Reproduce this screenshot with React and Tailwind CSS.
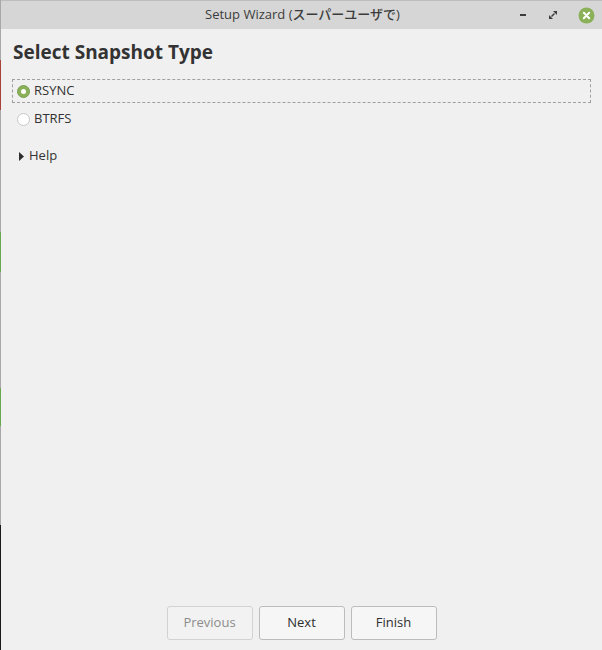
import React from "react";

const font = { fontFamily: '"Open Sans", "Noto Sans", "Noto Sans CJK JP", sans-serif' };

function Radio({ checked }) {
  if (checked) {
    return (
      <span className="w-[13px] h-[13px] rounded-full bg-[#8bb158] border border-[#7a9e4e] flex items-center justify-center">
        <span className="w-[5px] h-[5px] rounded-full bg-white" />
      </span>
    );
  }
  return <span className="w-[13px] h-[13px] rounded-full bg-white border border-[#c8c8c8]" />;
}

export default function App() {
  return (
    <div className="w-[602px] h-[650px] flex bg-[#f0f0f0] overflow-hidden" style={font}>
      <div className="w-[1px] flex flex-col">
        <div className="h-[60px] bg-[#a8a8a8]" />
        <div className="h-[50px] bg-[#a8433b]" />
        <div className="h-[122px] bg-[#a8a8a8]" />
        <div className="h-[40px] bg-[#6aa84f]" />
        <div className="h-[116px] bg-[#a8a8a8]" />
        <div className="h-[38px] bg-[#6aa84f]" />
        <div className="h-[99px] bg-[#a8a8a8]" />
        <div className="flex-1 bg-[#1a1a1a]" />
      </div>
      <div className="flex-1 flex flex-col">
        <div className="h-[1px] bg-[#bdbdbd]" />
        <div className="h-[28px] bg-[#d6d6d6] flex items-center relative">
          <div className="flex-1 text-center text-[13px] font-medium text-[#3c3c3c] pl-[2px]">
            Setup Wizard (スーパーユーザで)
          </div>
          <div className="absolute right-[7px] top-0 h-full flex items-center gap-[20px]">
            <svg width="10" height="10" viewBox="0 0 10 10">
              <rect x="2" y="4" width="6" height="2" fill="#3c3c3c" />
            </svg>
            <svg width="10" height="10" viewBox="0 0 10 10">
              <path d="M5 1 L9 1 L9 5 Z" fill="#3c3c3c" />
              <path d="M1 5 L5 9 L1 9 Z" fill="#3c3c3c" />
              <path d="M3.5 6.5 L6.5 3.5" stroke="#3c3c3c" strokeWidth="1.4" />
            </svg>
            <svg width="17" height="17" viewBox="0 0 17 17">
              <circle cx="8.5" cy="8.5" r="8" fill="#8bb158" />
              <path d="M5.8 5.8 L11.2 11.2 M11.2 5.8 L5.8 11.2" stroke="white" strokeWidth="2" strokeLinecap="round" />
            </svg>
          </div>
        </div>
        <div className="flex-1 flex flex-col px-[11px]">
          <div className="mt-[10px] pl-[1px] text-[19px] font-bold text-[#333333] leading-[26px]">
            Select Snapshot Type
          </div>
          <div className="mt-[14px] h-[24px] border border-dashed border-[#a0a0a0] flex items-center gap-[4px] pl-[4px] w-[579px]">
            <Radio checked />
            <span className="text-[13px] text-[#333333]">RSYNC</span>
          </div>
          <div className="mt-[4px] h-[24px] flex items-center gap-[4px] pl-[5px]">
            <Radio />
            <span className="text-[13px] text-[#333333]">BTRFS</span>
          </div>
          <div className="mt-[13px] h-[24px] flex items-center gap-[5px] pl-[7px]">
            <svg width="5" height="9" viewBox="0 0 5 9">
              <path d="M0 0 L5 4.5 L0 9 Z" fill="#2e2e2e" />
            </svg>
            <span className="text-[13px] text-[#333333]">Help</span>
          </div>
          <div className="flex-1" />
          <div className="flex justify-center gap-[6px] mb-[10px]">
            <button className="w-[86px] h-[34px] rounded-[3px] border border-[#d2d2d2] bg-[#f2f2f2] text-[13px] text-[#8c8c8c]">
              Previous
            </button>
            <button className="w-[86px] h-[34px] rounded-[3px] border border-[#bcbcbc] bg-[#f6f6f6] text-[13px] text-[#2e2e2e]">
              Next
            </button>
            <button className="w-[86px] h-[34px] rounded-[3px] border border-[#bcbcbc] bg-[#f6f6f6] text-[13px] text-[#2e2e2e]">
              Finish
            </button>
          </div>
        </div>
      </div>
    </div>
  );
}
